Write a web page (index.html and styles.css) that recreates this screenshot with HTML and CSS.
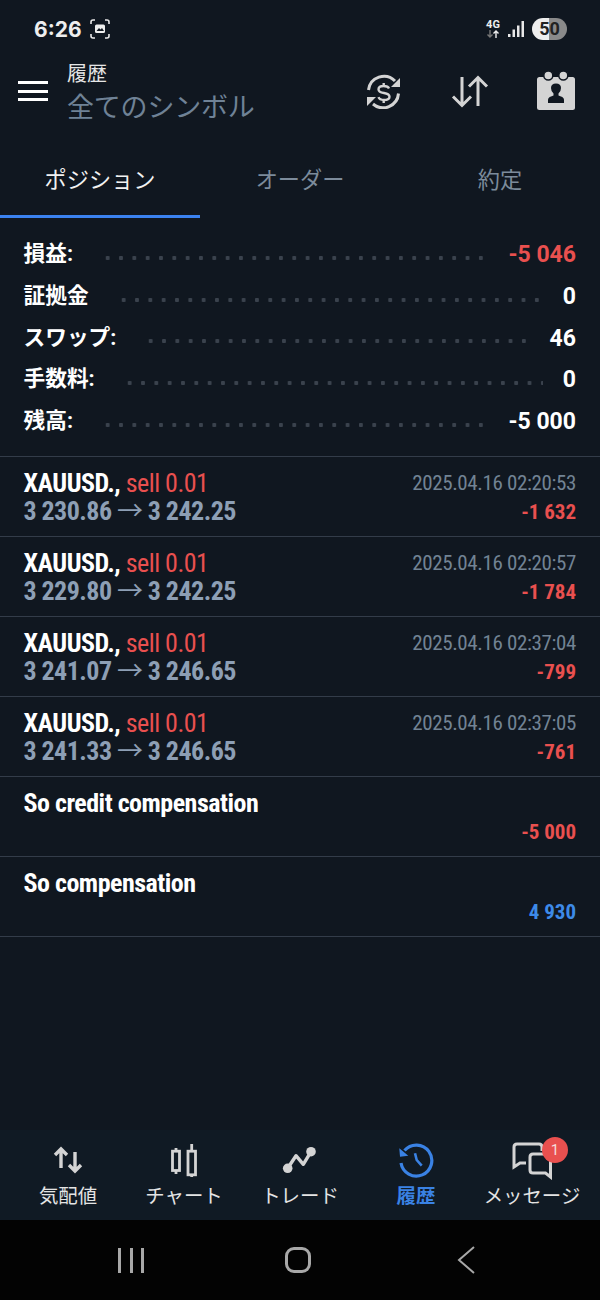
FILE: index.html
```html
<!DOCTYPE html>
<html lang="ja">
<head>
    <meta charset="UTF-8">
    <meta name="viewport" content="width=device-width, initial-scale=1.0">
    <title>履歴</title>
    <link rel="stylesheet" href="styles.css">
</head>
<body>
    <div class="screen">
        <div class="status-bar">
            <span class="clock">6:26</span>
            <svg class="shot-icon" width="20" height="20" viewBox="0 0 20 20" fill="none" stroke="#e8e8e8" stroke-width="1.6">
                <path d="M1 5V3q0-2 2-2h2M15 1h2q2 0 2 2v2M19 15v2q0 2-2 2h-2M5 19H3q-2 0-2-2v-2"/>
                <rect x="5" y="5.500" width="10" height="8.500" rx="1.500" fill="#eee" stroke="none"/>
                <path d="M6.500 12l2.500-3 1.500 1.500 1.500-1.500 2 3z" fill="#101720" stroke="none"/>
            </svg>
            <div class="status-right">
                <div class="net">
                    <span class="net-label">4G</span>
                    <svg width="14" height="8" viewBox="0 0 14 8" fill="none" stroke-width="1.4">
                        <path d="M4 0v7M1.500 4.500L4 7l2.500-2.500" stroke="#777"/>
                        <path d="M10 8V1M7.500 3.500L10 1l2.500 2.500" stroke="#eee"/>
                    </svg>
                </div>
                <svg width="16" height="16" viewBox="0 0 16 16" fill="#e8e8e8">
                    <rect x="0" y="13" width="2.500" height="3"/>
                    <rect x="4.500" y="8.500" width="2.500" height="7.500"/>
                    <rect x="9" y="4.500" width="2.500" height="11.500"/>
                    <rect x="13.500" y="0" width="2.500" height="16"/>
                </svg>
                <div class="battery"><span>50</span></div>
            </div>
        </div>

        <header class="app-bar">
            <div class="menu"><i></i><i></i><i></i></div>
            <div class="titles">
                <div class="title">履歴</div>
                <div class="subtitle">全てのシンボル</div>
            </div>
            <div class="actions">
                <svg width="36" height="36" viewBox="0 0 36 36" fill="none" stroke="#d4d4d4" stroke-width="3">
                    <path d="M3.500 17A15.500 15.500 0 0 1 30 8"/>
                    <path d="M33.500 20.500A15.500 15.500 0 0 1 8 31"/>
                    <path d="M35 5v9h-9z" fill="#d4d4d4" stroke="none"/>
                    <path d="M2 33v-9h9z" fill="#d4d4d4" stroke="none"/>
                    <path d="M24 15.500q-1-2.500-5.500-2.500-5 0-5 3.200 0 3 5.500 3.800t5.500 3.800q0 3.200-5.500 3.200-4.500 0-5.500-2.800M18.700 10v3M18.700 27v3" stroke-width="2.400"/>
                </svg>
                <svg class="swap-icon" width="41" height="34" viewBox="0 0 41 34" fill="none" stroke="#d4d4d4" stroke-width="3">
                    <path d="M14 3v28M5 22.500l9 9 9-9"/>
                    <path d="M30 32V4M21 12.500l9-9 9 9"/>
                </svg>
                <svg width="40" height="40" viewBox="0 0 40 40">
                    <rect x="1" y="6" width="38" height="33" rx="2.500" fill="#d4d4d4"/>
                    <circle cx="12.300" cy="4.500" r="4.500" fill="#d4d4d4" stroke="#101720" stroke-width="1.500"/>
                    <circle cx="27.300" cy="4.500" r="4.500" fill="#d4d4d4" stroke="#101720" stroke-width="1.500"/>
                    <path d="M12 32v-3q0-2.500 3-3.500l2.500-1v-2q-2.500-2-2.500-5.500 0-4.500 5-4.500t5 4.500q0 3.500-2.500 5.500v2l2.500 1q3 1 3 3.500v3z" fill="#101720"/>
                </svg>
            </div>
        </header>

        <nav class="tabs">
            <div class="tab active">ポジション</div>
            <div class="tab">オーダー</div>
            <div class="tab">約定</div>
        </nav>

        <section class="summary">
            <div class="sum-row"><span class="sum-label">損益:</span><span class="leader"></span><span class="sum-value red">-5 046</span></div>
            <div class="sum-row"><span class="sum-label">証拠金</span><span class="leader"></span><span class="sum-value">0</span></div>
            <div class="sum-row"><span class="sum-label">スワップ:</span><span class="leader"></span><span class="sum-value">46</span></div>
            <div class="sum-row"><span class="sum-label">手数料:</span><span class="leader"></span><span class="sum-value">0</span></div>
            <div class="sum-row"><span class="sum-label">残高:</span><span class="leader"></span><span class="sum-value">-5 000</span></div>
        </section>

        <section class="deals">
            <div class="deal">
                <div class="deal-top"><span class="symbol">XAUUSD., <span class="red-thin">sell 0.01</span></span><span class="time">2025.04.16 02:20:53</span></div>
                <div class="deal-bottom"><span class="prices">3 230.86 <span class="arrow">→</span> 3 242.25</span><span class="profit red">-1 632</span></div>
            </div>
            <div class="deal">
                <div class="deal-top"><span class="symbol">XAUUSD., <span class="red-thin">sell 0.01</span></span><span class="time">2025.04.16 02:20:57</span></div>
                <div class="deal-bottom"><span class="prices">3 229.80 <span class="arrow">→</span> 3 242.25</span><span class="profit red">-1 784</span></div>
            </div>
            <div class="deal">
                <div class="deal-top"><span class="symbol">XAUUSD., <span class="red-thin">sell 0.01</span></span><span class="time">2025.04.16 02:37:04</span></div>
                <div class="deal-bottom"><span class="prices">3 241.07 <span class="arrow">→</span> 3 246.65</span><span class="profit red">-799</span></div>
            </div>
            <div class="deal">
                <div class="deal-top"><span class="symbol">XAUUSD., <span class="red-thin">sell 0.01</span></span><span class="time">2025.04.16 02:37:05</span></div>
                <div class="deal-bottom"><span class="prices">3 241.33 <span class="arrow">→</span> 3 246.65</span><span class="profit red">-761</span></div>
            </div>
            <div class="deal">
                <div class="deal-top"><span class="symbol">So credit compensation</span></div>
                <div class="deal-bottom"><span class="prices"></span><span class="profit red">-5 000</span></div>
            </div>
            <div class="deal">
                <div class="deal-top"><span class="symbol">So compensation</span></div>
                <div class="deal-bottom"><span class="prices"></span><span class="profit blue">4 930</span></div>
            </div>
        </section>

        <footer class="bottom-nav">
            <div class="nav-item">
                <svg width="30" height="40" viewBox="0 0 30 40" fill="none" stroke="#d4d4d4" stroke-width="3.400">
                    <path d="M8 28V10M2 15l6-6 6 6"/>
                    <path d="M22 12v18M16 25l6 6 6-6"/>
                </svg>
                <span>気配値</span>
            </div>
            <div class="nav-item">
                <svg width="30" height="40" viewBox="0 0 30 40" fill="none" stroke="#d4d4d4" stroke-width="2.800">
                    <rect x="3.500" y="11.200" width="7" height="19.300"/>
                    <rect x="19" y="11.200" width="7.500" height="23.600"/>
                    <path d="M7 8v3M7 31v3M22.700 4v7M22.700 35v2"/>
                </svg>
                <span>チャート</span>
            </div>
            <div class="nav-item">
                <svg width="36" height="40" viewBox="0 0 36 40" fill="#d4d4d4">
                    <path d="M5.700 28.300L14 15.700 21.300 24.300 29 11.700" fill="none" stroke="#d4d4d4" stroke-width="3.400" stroke-linejoin="round"/>
                    <circle cx="5.700" cy="28.300" r="4.800"/>
                    <circle cx="29" cy="11.700" r="4.800"/>
                </svg>
                <span>トレード</span>
            </div>
            <div class="nav-item current">
                <svg width="36" height="40" viewBox="0 0 36 40" fill="none" stroke="#3a82e4" stroke-width="3.200">
                    <path d="M6.500 10.500A15.500 15.500 0 1 1 3 23"/>
                    <path d="M1.300 8.300L2 16.700 10.300 15.700z" fill="#3a82e4" stroke="none"/>
                    <path d="M17 13.300L18.700 20 23.700 25.700" stroke-width="2.600"/>
                </svg>
                <span>履歴</span>
            </div>
            <div class="nav-item msg">
                <svg width="42" height="40" viewBox="0 0 42 40" fill="none" stroke="#d4d4d4" stroke-width="3">
                    <path d="M15 23H9L3 27V7q0-3 3-3h22q3 0 3 3v4"/>
                    <path d="M22 14h14.500q3 0 3 3v20l-5-4H22q-3 0-3-3V17q0-3 3-3z"/>
                </svg>
                <span class="badge">1</span>
                <span>メッセージ</span>
            </div>
        </footer>

        <div class="system-nav">
            <div class="recents"><i></i><i></i><i></i></div>
            <div class="home"></div>
            <svg class="back" width="20" height="28" viewBox="0 0 20 28" fill="none" stroke="#a8a8a8" stroke-width="2">
                <path d="M18 1L3 14l15 13"/>
            </svg>
        </div>
    </div>
</body>
</html>
```

FILE: styles.css
```css
* {
    box-sizing: border-box;
}
body {
    margin: 0;
    background-color: #101720;
    font-family: Roboto, "Noto Sans CJK JP", sans-serif;
    color: #fff;
}
.screen {
    display: flex;
    flex-direction: column;
    width: 600px;
    height: 1300px;
    overflow: hidden;
}

/* status bar */
.status-bar {
    display: flex;
    align-items: center;
    height: 50px;
    padding: 8px 33px 0 34px;
    flex-shrink: 0;
}
.clock {
    font-size: 21px;
    font-weight: 700;
    color: #eee;
    font-family: Inter, sans-serif;
}
.shot-icon {
    margin-left: 8px;
}
.status-right {
    display: flex;
    align-items: center;
    gap: 8px;
    margin-left: auto;
}
.net {
    display: flex;
    flex-direction: column;
    align-items: center;
}
.net-label {
    font-size: 11px;
    font-weight: 700;
    line-height: 10px;
    color: #eee;
}
.battery {
    width: 35px;
    height: 22px;
    border-radius: 11px;
    background: linear-gradient(to right, #eeeeee 50%, #8a8a8a 50%);
    color: #222;
    font-size: 18px;
    font-weight: 700;
    text-align: center;
    line-height: 22px;
}

/* app bar */
.app-bar {
    display: flex;
    align-items: center;
    height: 82px;
    margin-bottom: 8px;
    padding-left: 18px;
    flex-shrink: 0;
}
.menu {
    display: flex;
    flex-direction: column;
    gap: 5.500px;
    width: 30px;
}
.menu i {
    display: block;
    height: 3px;
    background-color: #fff;
}
.titles {
    margin-left: 19px;
    padding-top: 6px;
}
.title {
    font-size: 20px;
    line-height: 28px;
    color: #e6e6e6;
}
.subtitle {
    font-size: 27px;
    line-height: 40px;
    letter-spacing: -0.2px;
    color: #6f8296;
}
.actions {
    display: flex;
    align-items: center;
    gap: 47px;
    margin-left: auto;
    padding-right: 24px;
}

/* tabs */
.tabs {
    display: flex;
    height: 78px;
    flex-shrink: 0;
}
.tab {
    flex: 1;
    display: flex;
    align-items: center;
    justify-content: center;
    font-size: 22.200px;
    color: #7c8b9b;
    border-bottom: 3px solid transparent;
}
.tab.active {
    color: #f2f2f2;
    border-bottom-color: #3b82f0;
}

/* summary */
.summary {
    padding: 16px 24px 14px 23.500px;
    border-bottom: 1px solid #333c49;
    flex-shrink: 0;
}
.sum-row {
    display: flex;
    align-items: center;
    height: 41.700px;
}
.sum-label {
    margin-top: -6px;
    font-size: 21.700px;
    font-weight: 700;
}
.sum-value {
    font-size: 23px;
    font-weight: 700;
}
.leader {
    flex: 1;
    height: 4px;
    margin: 6px 20px 0 28px;
    background-image: radial-gradient(circle, #3a424d 2px, transparent 2.300px);
    background-size: 13.330px 4px;
    background-repeat: repeat-x;
}
.red {
    color: #e9504f;
}
.blue {
    color: #3d8ae8;
}

/* deal list */
.deal {
    height: 80px;
    padding: 11px 24px 0 23.500px;
    border-bottom: 1px solid #333c49;
}
.deal-top,
.deal-bottom {
    display: flex;
    justify-content: space-between;
    align-items: center;
    height: 29px;
}
.symbol,
.prices {
    font-size: 26px;
    font-stretch: 75%;
    display: inline-block;
    white-space: nowrap;
}
.symbol {
    font-weight: 700;
    letter-spacing: -0.5px;
}
.red-thin {
    font-weight: 400;
    color: #e9504f;
}
.prices {
    margin-top: -6px;
    font-weight: 700;
    letter-spacing: -0.55px;
    color: #8d9fb5;
}
.arrow {
    font-weight: 400;
}
.time {
    font-size: 21px;
    font-stretch: 75%;
    letter-spacing: -0.37px;
    color: #728394;
}
.profit {
    font-size: 21px;
    font-weight: 700;
    font-stretch: 75%;
}

/* bottom nav */
.bottom-nav {
    display: flex;
    margin-top: auto;
    height: 90px;
    padding: 10px 10px 0;
    background-color: #101a24;
    flex-shrink: 0;
}
.nav-item {
    position: relative;
    flex: 1;
    display: flex;
    flex-direction: column;
    align-items: center;
    font-size: 19.400px;
    color: #e4e4e4;
    white-space: nowrap;
}
.nav-item.current {
    color: #3a82e4;
    font-weight: 700;
}
.badge {
    position: absolute;
    top: -3px;
    left: 68px;
    width: 26px;
    height: 26px;
    border-radius: 50%;
    background-color: #e9504f;
    color: #f5dcdc;
    font-size: 15px;
    line-height: 26px;
    text-align: center;
}

/* android nav */
.system-nav {
    display: flex;
    align-items: center;
    gap: 141px;
    height: 80px;
    padding-left: 118px;
    background-color: #030303;
    flex-shrink: 0;
}
.recents {
    display: flex;
    gap: 8.500px;
}
.recents i {
    display: block;
    width: 3px;
    height: 25px;
    background-color: #a8a8a8;
}
.home {
    width: 26px;
    height: 26px;
    border: 3px solid #a8a8a8;
    border-radius: 9px;
}
.back {
    margin-left: 4px;
}
```
